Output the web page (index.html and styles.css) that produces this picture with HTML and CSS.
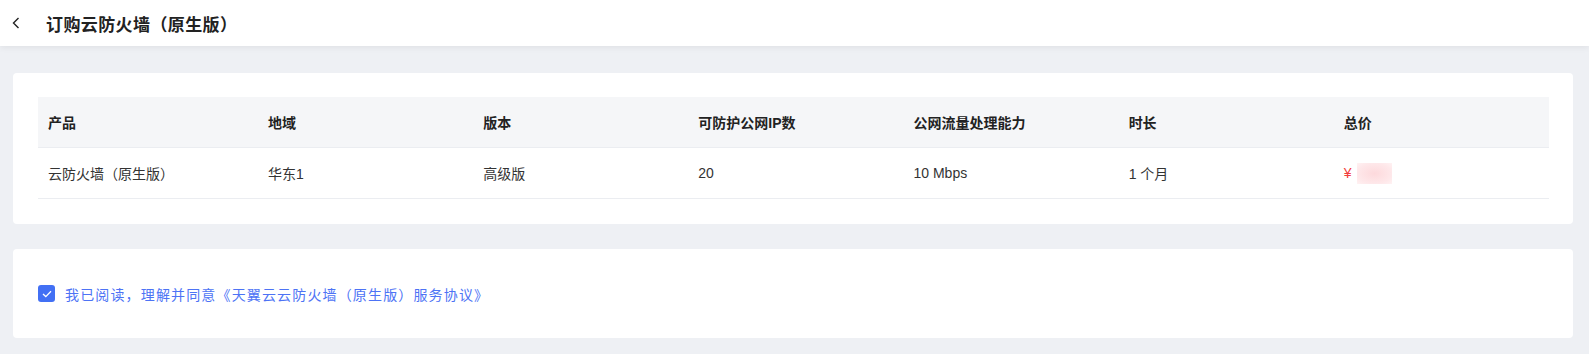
FILE: index.html
```html
<!DOCTYPE html>
<html lang="zh-CN">
<head>
    <meta charset="UTF-8">
    <meta name="viewport" content="width=device-width, initial-scale=1.0">
    <title>订购云防火墙（原生版）</title>
    <link rel="stylesheet" href="styles.css">
</head>
<body>
    <!-- Top bar -->
    <div class="top-bar">
        <span class="back-btn">
            <svg width="8" height="12" viewBox="0 0 8 12"><path d="M6.5 1 L1.5 6 L6.5 11" fill="none" stroke="#222" stroke-width="1.4"/></svg>
        </span>
        <h1>订购云防火墙（原生版）</h1>
    </div>

    <div class="page">
        <!-- Order summary -->
        <div class="card order-card">
            <table class="order-table">
                <colgroup>
                    <col class="col-first">
                    <col><col><col><col><col><col>
                </colgroup>
                <thead>
                    <tr>
                        <th>产品</th>
                        <th>地域</th>
                        <th>版本</th>
                        <th>可防护公网IP数</th>
                        <th>公网流量处理能力</th>
                        <th>时长</th>
                        <th>总价</th>
                    </tr>
                </thead>
                <tbody>
                    <tr>
                        <td>云防火墙（原生版）</td>
                        <td>华东1</td>
                        <td>高级版</td>
                        <td>20</td>
                        <td>10 Mbps</td>
                        <td>1 个月</td>
                        <td><span class="price">¥<span class="price-mask"></span></span></td>
                    </tr>
                </tbody>
            </table>
        </div>

        <!-- Agreement -->
        <div class="card agree-card">
            <label class="agree">
                <span class="checkbox">
                    <svg width="10" height="8" viewBox="0 0 10 8"><path d="M1 4 L3.8 6.6 L9 1.2" fill="none" stroke="#fff" stroke-width="1.3"/></svg>
                </span>
                <span class="agree-text">我已阅读，理解并同意《天翼云云防火墙（原生版）服务协议》</span>
            </label>
        </div>
    </div>
</body>
</html>
```

FILE: styles.css
```css
body {
    margin: 0;
    background-color: #eef0f4;
    font-family: "Liberation Sans", "Noto Sans CJK SC", sans-serif;
    font-size: 14px;
    color: #333;
}
.top-bar {
    height: 46px;
    background: white;
    display: flex;
    align-items: center;
    box-shadow: 0 2px 6px rgba(0,0,0,0.06);
    position: relative;
}
.back-btn {
    display: flex;
    width: 20px;
    margin-left: 12px;
    margin-right: 14px;
}
.top-bar h1 {
    margin: 0;
    font-size: 17px;
    font-weight: bold;
    letter-spacing: 0.4px;
    color: #222;
}
.page {
    padding: 27px 16px 16px 13px;
    display: flex;
    flex-direction: column;
    gap: 25px;
}
.card {
    background: white;
    border-radius: 4px;
}
.order-card {
    padding: 24px 24px 25px 25px;
}
.order-table {
    width: 100%;
    border-collapse: collapse;
    table-layout: fixed;
}
.col-first {
    width: 220px;
}
.order-table th,
.order-table td {
    text-align: left;
    padding: 0 10px;
    border-bottom: 1px solid #ebedf1;
}
.order-table th {
    height: 50px;
    background: #f5f6f8;
    font-weight: bold;
    color: #222;
}
.order-table td {
    height: 50px;
    color: #333;
}
.price {
    color: #f23c3c;
    display: inline-flex;
    align-items: center;
    gap: 5px;
}
.price-mask {
    display: inline-block;
    width: 35px;
    height: 21px;
    background: radial-gradient(ellipse at center, #fdd9dc 0%, #fee8ea 70%, #fff2f3 100%);
}
.agree-card {
    height: 89px;
    display: flex;
    align-items: center;
    padding: 0 25px;
}
.agree {
    display: flex;
    align-items: center;
    gap: 10px;
    cursor: pointer;
}
.checkbox {
    width: 17px;
    height: 17px;
    border-radius: 3px;
    background: #4270f4;
    display: flex;
    align-items: center;
    justify-content: center;
}
.agree-text {
    color: #4d73f5;
    letter-spacing: 1.15px;
}
```
